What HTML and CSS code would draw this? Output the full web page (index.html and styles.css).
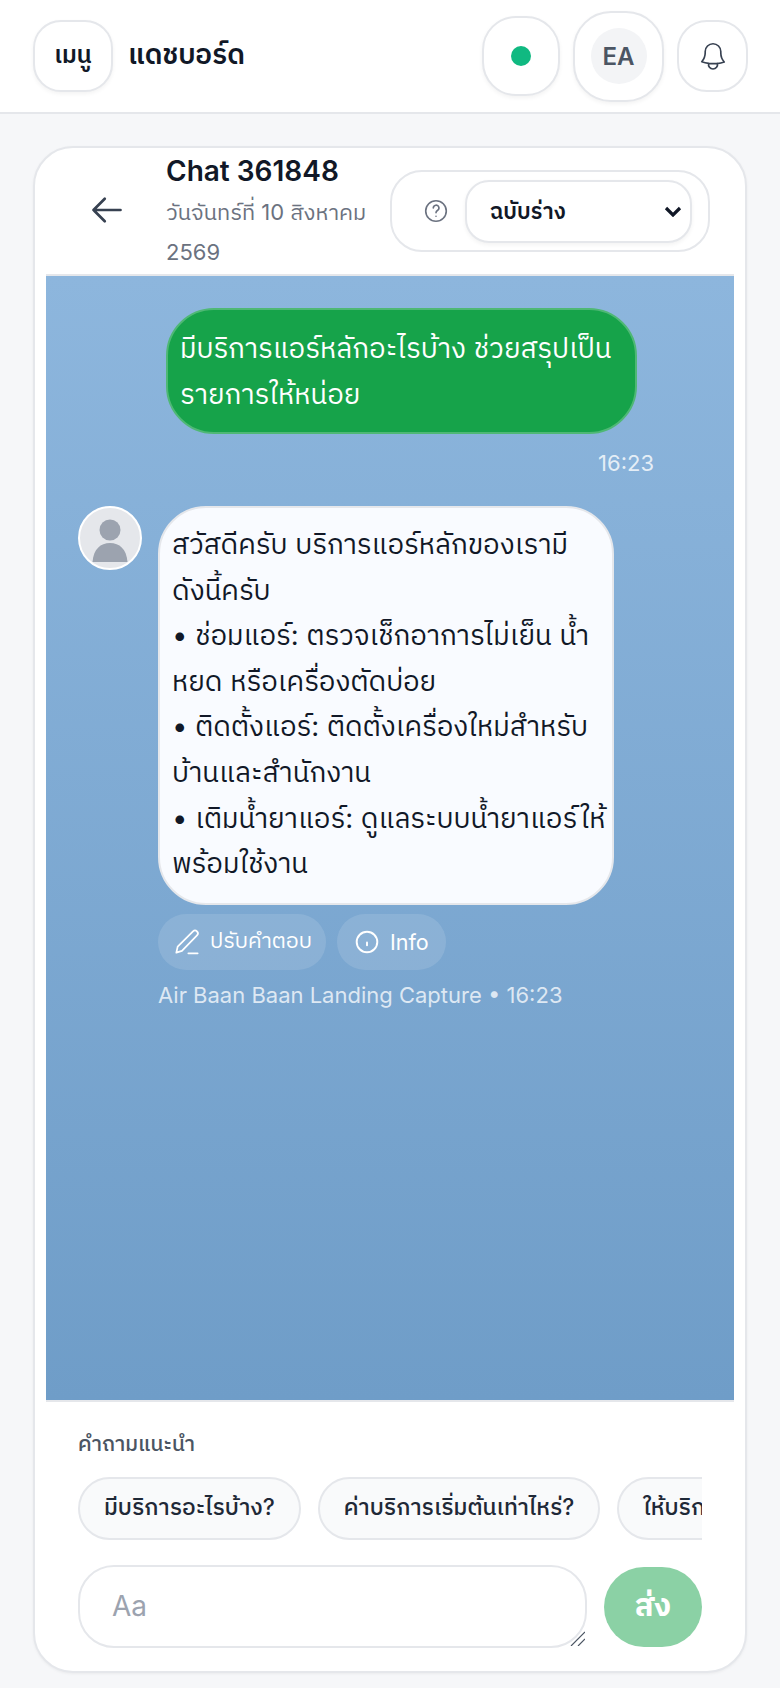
FILE: index.html
```html
<!DOCTYPE html>
<html>
<head>
  <meta name="viewport" content="width=device-width, initial-scale=1">
  <title>Chat 361848</title>
  <link rel="stylesheet" href="styles.css">
</head>
<body>
  <header class="topbar">
    <button class="menu-btn">เมนู</button>
    <div class="page-title">แดชบอร์ด</div>
    <div class="topbar-right">
      <div class="status-pill"><span class="status-dot"></span></div>
      <div class="user-pill"><span class="user-initials">EA</span></div>
      <button class="bell-btn">
        <svg width="36" height="36" viewBox="0 0 24 24" fill="none" stroke="#374151" stroke-width="1.1" stroke-linecap="round" stroke-linejoin="round">
          <path d="M14.9 17.1a24 24 0 0 0 4.600-1.100 9 9 0 0 1-2.300-6V9.300V9a5.200 5.200 0 1 0-10.400 0v.8a9 9 0 0 1-2.300 6 24 24 0 0 0 4.600 1.100m5.800 0a24 24 0 0 1-5.800 0m5.800 0a3 3 0 1 1-5.800 0"/>
        </svg>
      </button>
    </div>
  </header>

  <main class="page">
    <section class="card">
      <div class="chat-head">
        <button class="back-btn">
          <svg width="36" height="36" viewBox="0 0 24 24" fill="none" stroke="#374151" stroke-width="1.800" stroke-linecap="round" stroke-linejoin="round">
            <path d="M10.500 19.500 3 12l7.500-7.500M3 12h18"/>
          </svg>
        </button>
        <div class="chat-title">
          <h1>Chat 361848</h1>
          <p>วันจันทร์ที่ 10 สิงหาคม 2569</p>
        </div>
        <div class="state-box">
          <svg width="26" height="26" viewBox="0 0 24 24" fill="none" stroke="#6b7280" stroke-width="1.500" stroke-linecap="round" stroke-linejoin="round">
            <circle cx="12" cy="12" r="9.500"/>
            <path d="M9.500 9.200a2.600 2.600 0 1 1 3.800 2.300c-.8.500-1.300 1-1.300 2M12 16.800v.1"/>
          </svg>
          <select class="state-select">
            <option>ฉบับร่าง</option>
          </select>
        </div>
      </div>

      <div class="chat-body">
        <div class="bubble-out">มีบริการแอร์หลักอะไรบ้าง ช่วยสรุปเป็นรายการให้หน่อย</div>
        <div class="time-out">16:23</div>

        <div class="msg-in">
          <div class="avatar">
            <svg width="60" height="60" viewBox="0 0 60 60" fill="#9ca3af">
              <circle cx="30" cy="22" r="10.500"/>
              <path d="M12.500 54c1-13 8-19 17.500-19s16.500 6 17.500 19z"/>
            </svg>
          </div>
          <div class="msg-col">
            <div class="bubble-in">สวัสดีครับ บริการแอร์หลักของเรามีดังนี้ครับ<br>• ช่อมแอร์: ตรวจเช็กอาการไม่เย็น น้ำหยด หรือเครื่องตัดบ่อย<br>• ติดตั้งแอร์: ติดตั้งเครื่องใหม่สำหรับบ้านและสำนักงาน<br>• เติมน้ำยาแอร์: ดูแลระบบน้ำยาแอร์ให้พร้อมใช้งาน</div>
            <div class="msg-actions">
              <button class="action-btn action-edit">
                <svg width="32" height="32" viewBox="0 0 24 24" fill="none" stroke="#fff" stroke-width="1.300" stroke-linecap="round" stroke-linejoin="round">
                  <path d="M4 20l1-4.500L16.500 4a2.100 2.100 0 0 1 3 3L8.200 18.700zM13 20.500h7"/>
                </svg>
                ปรับคำตอบ
              </button>
              <button class="action-btn action-info">
                <svg width="26" height="26" viewBox="0 0 24 24" fill="none" stroke="#fff" stroke-width="1.800" stroke-linecap="round">
                  <circle cx="12" cy="12" r="9.500"/>
                  <path d="M12 12.500v2.500"/>
                </svg>
                Info
              </button>
            </div>
            <div class="msg-meta">Air Baan Baan Landing Capture • 16:23</div>
          </div>
        </div>
      </div>

      <div class="composer">
        <div class="suggest-label">คำถามแนะนำ</div>
        <div class="chips">
          <button class="chip">มีบริการอะไรบ้าง?</button>
          <button class="chip">ค่าบริการเริ่มต้นเท่าไหร่?</button>
          <button class="chip">ให้บริการพื้นที่ไหนบ้าง?</button>
        </div>
        <div class="send-row">
          <textarea class="msg-input" placeholder="Aa"></textarea>
          <button class="send-btn">ส่ง</button>
        </div>
      </div>
    </section>
  </main>
</body>
</html>
```

FILE: styles.css
```css
* { box-sizing: border-box; }
html, body { height: 100%; }
body {
  margin: 0;
  font-family: Inter, "IBM Plex Sans Thai", sans-serif;
  background: #f6f7f9;
  color: #111827;
  display: flex;
  flex-direction: column;
  overflow: hidden;
}
button, select, textarea { font-family: inherit; }

.topbar {
  height: 114px;
  flex: none;
  background: #fff;
  border-bottom: 2px solid #e5e7eb;
  display: flex;
  align-items: center;
  padding: 0 32px 0 33px;
}
.menu-btn {
  width: 80px;
  height: 72px;
  background: #fff;
  border: 2px solid #e5e7eb;
  border-radius: 28px;
  box-shadow: 0 2px 4px rgba(0,0,0,0.05);
  font-size: 24px;
  font-weight: 600;
  color: #111827;
  padding: 0;
}
.page-title {
  margin-left: 15px;
  font-size: 28px;
  font-weight: 600;
  color: #111827;
}
.topbar-right {
  margin-left: auto;
  display: flex;
  align-items: center;
  gap: 13px;
}
.status-pill {
  width: 78px;
  height: 80px;
  background: #fff;
  border: 2px solid #e5e7eb;
  border-radius: 34px;
  box-shadow: 0 2px 4px rgba(0,0,0,0.05);
  display: flex;
  align-items: center;
  justify-content: center;
}
.status-dot {
  width: 20px;
  height: 20px;
  border-radius: 50%;
  background: #10b981;
}
.user-pill {
  width: 91px;
  height: 91px;
  background: #fff;
  border: 2px solid #e5e7eb;
  border-radius: 38px;
  box-shadow: 0 2px 4px rgba(0,0,0,0.05);
  display: flex;
  align-items: center;
  justify-content: center;
}
.user-initials {
  width: 56px;
  height: 56px;
  border-radius: 50%;
  background: #f3f4f6;
  display: flex;
  align-items: center;
  justify-content: center;
  font-size: 24px;
  font-weight: 600;
  color: #4b5563;
}
.bell-btn {
  width: 71px;
  height: 72px;
  background: #fff;
  border: 2px solid #e5e7eb;
  border-radius: 30px;
  display: flex;
  align-items: center;
  justify-content: center;
  padding: 0;
}

.page {
  flex: 1;
  min-height: 0;
  padding: 32px 33px 15px;
  display: flex;
}
.card {
  flex: 1;
  min-width: 0;
  background: #fff;
  border: 2px solid #e5e7eb;
  border-radius: 40px;
  padding: 0 11px;
  display: flex;
  flex-direction: column;
  box-shadow: 0 1px 3px rgba(0,0,0,0.05);
}

.chat-head {
  height: 126px;
  flex: none;
  display: flex;
  align-items: center;
  padding: 0 24px 0 43px;
}
.back-btn {
  background: none;
  border: none;
  padding: 0;
  width: 36px;
  height: 36px;
  margin-top: -2px;
  flex: none;
}
.chat-title {
  margin-left: 41px;
  width: 210px;
  flex: none;
}
.chat-title h1 {
  margin: 0;
  font-size: 28px;
  line-height: 40px;
  font-weight: 600;
  color: #111827;
}
.chat-title p {
  margin: 1px 0 -1px;
  font-size: 22px;
  line-height: 40px;
  color: #6b7280;
}
.state-box {
  margin-left: auto;
  width: 320px;
  height: 82px;
  border: 2px solid #e5e7eb;
  border-radius: 32px;
  display: flex;
  align-items: center;
  gap: 16px;
  padding: 0 16px 0 31px;
}
.state-box svg { flex: none; }
.state-select {
  flex: 1;
  min-width: 0;
  height: 63px;
  appearance: none;
  background: #fff url("data:image/svg+xml,%3Csvg xmlns='http://www.w3.org/2000/svg' viewBox='0 0 18 11'%3E%3Cpath d='M2 2l7 7 7-7' fill='none' stroke='%23111827' stroke-width='3.200'/%3E%3C/svg%3E") no-repeat right 8px center / 18px 11px;
  border: 2px solid #e5e7eb;
  border-radius: 24px;
  box-shadow: 0 2px 4px rgba(0,0,0,0.05);
  padding: 0 30px 0 23px;
  font-size: 22px;
  font-weight: 600;
  color: #111827;
}

.chat-body {
  flex: 1;
  min-height: 0;
  background: linear-gradient(to bottom, #8db6dd, #6f9dc8);
  border-top: 2px solid #e5e7eb;
  border-bottom: 2px solid #e5e7eb;
  padding: 32px 30px 0 32px;
  overflow: hidden;
}
.bubble-out {
  width: 471px;
  margin-left: 88px;
  background: #16a34a;
  border: 2px solid #4fb875;
  border-radius: 48px;
  padding: 15px 12px;
  font-size: 27.600px;
  line-height: 46px;
  color: #fff;
}
.time-out {
  width: 488px;
  margin-left: 88px;
  margin-top: 14px;
  text-align: right;
  font-size: 22px;
  line-height: 30px;
  color: rgba(255,255,255,0.8);
}
.msg-in {
  margin-top: 28px;
  display: flex;
  gap: 16px;
}
.avatar {
  width: 64px;
  height: 64px;
  flex: none;
  border-radius: 50%;
  background: #e5e7eb;
  border: 2px solid #fff;
  overflow: hidden;
}
.avatar svg { display: block; }
.msg-col { flex: 1; min-width: 0; }
.bubble-in {
  width: 456px;
  background: #f9fbff;
  border: 2px solid #e5e7eb;
  border-radius: 48px;
  padding: 14px 6px 16px 12px;
  font-size: 27.600px;
  line-height: 45.600px;
  color: #111827;
}
.msg-actions {
  margin-top: 9px;
  display: flex;
  gap: 11px;
}
.action-btn {
  height: 56px;
  border: none;
  border-radius: 28px;
  background: rgba(255,255,255,0.12);
  color: #fff;
  font-size: 21.500px;
  font-weight: 400;
  display: flex;
  align-items: center;
}
.action-edit {
  padding: 0 14px 0 13px;
  gap: 7px;
}
.action-info {
  padding: 0 17px;
  gap: 10px;
}
.msg-meta {
  margin-top: 10px;
  font-size: 22px;
  line-height: 30px;
  color: rgba(255,255,255,0.75);
}

.composer {
  flex: none;
  padding: 28px 32px 23px;
}
.suggest-label {
  font-size: 21px;
  line-height: 28px;
  font-weight: 500;
  color: #4b5563;
}
.chips {
  margin-top: 19px;
  display: flex;
  gap: 17px;
  overflow: hidden;
}
.chip {
  flex: none;
  height: 63px;
  padding: 0 24px;
  background: #f9fafb;
  border: 2px solid #e5e7eb;
  border-radius: 32px;
  font-size: 22.800px;
  font-weight: 500;
  color: #1f2937;
}
.send-row {
  margin-top: 25px;
  display: flex;
  align-items: center;
  gap: 17px;
}
.msg-input {
  flex: 1;
  min-width: 0;
  height: 83px;
  border: 2px solid #e5e7eb;
  border-radius: 36px;
  padding: 20px 32px;
  font-size: 28px;
  line-height: 38px;
  color: #111827;
  background: #fff;
}
.msg-input::placeholder { color: #9ca3af; }
.msg-input::-webkit-resizer {
  background: url("data:image/svg+xml,%3Csvg xmlns='http://www.w3.org/2000/svg' viewBox='0 0 15 15'%3E%3Cpath d='M1 15L15 1M8 15l7-7' stroke='%234b5563' stroke-width='1.200' fill='none'/%3E%3C/svg%3E") no-repeat center / 15px 15px;
}
.send-btn {
  width: 98px;
  height: 80px;
  flex: none;
  border: none;
  border-radius: 40px;
  background: #8bd1a5;
  color: #fff;
  font-size: 31px;
  font-weight: 700;
}
```
